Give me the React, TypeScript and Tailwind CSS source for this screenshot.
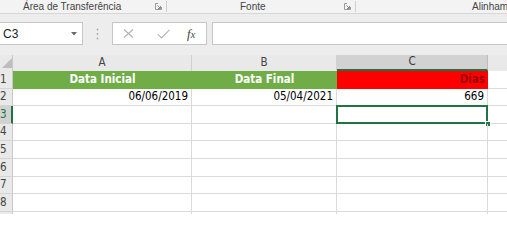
import React from "react";

const Launcher = () => (
  <svg width="7" height="7" viewBox="0 0 7 7" className="block">
    <path d="M0.5 0.5 H3 M0.5 0.5 V6.5 H6.5 V4" fill="none" stroke="#9a9a9a" strokeWidth="1" />
    <path d="M2.5 2.5 L5.5 5.5 M5.5 3 V5.5 H3" fill="none" stroke="#8a8a8a" strokeWidth="1" />
  </svg>
);

const rows = [1, 2, 3, 4, 5, 6, 7, 8, 9];
const cellFont = { fontFamily: '"DejaVu Sans Condensed", "Liberation Sans", Arial, sans-serif' };

export default function App() {
  return (
    <div
      className="w-[507px] h-[214px] overflow-hidden bg-[#ededed] flex flex-col"
      style={{ fontFamily: '"Liberation Sans", Arial, sans-serif' }}
    >
      {/* Ribbon group labels */}
      <div className="h-[14px] shrink-0 bg-[#f3f3f3] border-b border-[#d6d6d6] flex items-stretch text-[10px] leading-none text-[#444]">
        <div className="w-[167px] shrink-0 flex items-center border-r border-[#d0d0d0] my-[1px]">
          <span className="ml-[23px] whitespace-nowrap">Área de Transferência</span>
          <span className="ml-auto mr-[4px]"><Launcher /></span>
        </div>
        <div className="w-[189px] shrink-0 flex items-center border-r border-[#d0d0d0] my-[1px]">
          <span className="ml-[73px] whitespace-nowrap">Fonte</span>
          <span className="ml-auto mr-[4px]"><Launcher /></span>
        </div>
        <div className="flex-1 flex items-center overflow-hidden">
          <span className="ml-[116px] whitespace-nowrap">Alinham</span>
        </div>
      </div>

      {/* Formula bar */}
      <div className="h-[8px] shrink-0" />
      <div className="h-[23px] shrink-0 flex items-stretch">
        <div className="w-[83px] shrink-0 bg-white border-y border-r border-[#c6c6c6] flex items-center text-[12px] text-[#222]">
          <span className="ml-[3px]">C3</span>
          <svg width="6" height="4" viewBox="0 0 6 4" className="ml-auto mr-[5px]">
            <path d="M0 0 H6 L3 3.5 Z" fill="#6a6a6a" />
          </svg>
        </div>
        <div className="w-[29px] shrink-0 flex items-center justify-center">
          <svg width="3" height="12" viewBox="0 0 3 12" className="-ml-[1px]">
            <circle cx="1.5" cy="1.5" r="0.9" fill="#a8a8a8" />
            <circle cx="1.5" cy="6" r="0.9" fill="#a8a8a8" />
            <circle cx="1.5" cy="10.5" r="0.9" fill="#a8a8a8" />
          </svg>
        </div>
        <div className="w-[95px] shrink-0 bg-white border border-[#c6c6c6] flex items-center">
          <svg width="11" height="9" viewBox="0 0 11 9" className="ml-[10px]">
            <path d="M1 0.5 L10 8.5 M10 0.5 L1 8.5" stroke="#b3b3b3" strokeWidth="1.1" fill="none" />
          </svg>
          <svg width="13" height="10" viewBox="0 0 13 10" className="ml-[23px]">
            <path d="M0.8 5.2 L4.6 9 L12.4 0.8" stroke="#b3b3b3" strokeWidth="1.1" fill="none" />
          </svg>
          <span
            className="ml-[17px] text-[13px] italic text-[#444] leading-none"
            style={{ fontFamily: '"Liberation Serif", "Times New Roman", serif' }}
          >
            f<span className="text-[10px]">x</span>
          </span>
        </div>
        <div className="w-[5px] shrink-0" />
        <div className="flex-1 bg-white border-y border-l border-[#c6c6c6]" />
      </div>
      <div className="h-[10px] shrink-0" />

      {/* Grid */}
      <div className="flex-1 flex flex-col bg-white text-[11.5px] leading-none" style={cellFont}>
        {/* Column headers */}
        <div className="h-[16px] shrink-0 flex bg-[#e9e9e9] text-[#444] text-[11.5px]">
          <div className="w-[13px] shrink-0 border-r border-[#c9c9c9] relative">
            <svg width="10" height="10" viewBox="0 0 10 10" className="absolute left-[2px] top-[3px]">
              <path d="M10 0 V10 H0 Z" fill="#bdbdbd" />
            </svg>
          </div>
          <div className="w-[179px] shrink-0 border-r border-[#d0d0d0] flex items-center justify-center">A</div>
          <div className="w-[145px] shrink-0 border-r border-[#d0d0d0] flex items-center justify-center">B</div>
          <div className="w-[151px] shrink-0 bg-[#d2d2d2] border-r border-[#bdbdbd] border-b-2 border-b-[#217346] flex items-center justify-center text-[#3a3a3a]">C</div>
          <div className="flex-1" />
        </div>

        {rows.map((r) => {
          const sel = r === 3;
          return (
            <div key={r} className="h-[17.6px] shrink-0 flex">
              <div
                className={
                  sel
                    ? "w-[13px] shrink-0 bg-[#d2d2d2] border-r-2 border-r-[#217346] border-b border-b-[#d4d4d4] flex items-center text-[11.5px] text-[#217346]"
                    : "w-[13px] shrink-0 bg-[#e9e9e9] border-r border-r-[#c9c9c9] border-b border-b-[#d4d4d4] flex items-center text-[11.5px] text-[#444]"
                }
              >
                <span>{r}</span>
              </div>
              {r === 1 ? (
                <>
                  <div className="w-[179px] shrink-0 bg-[#70ad47] flex items-center justify-center font-bold text-white">
                    Data Inicial
                  </div>
                  <div className="w-[145px] shrink-0 bg-[#70ad47] flex items-center justify-center font-bold text-white">
                    Data Final
                  </div>
                  <div className="w-[151px] shrink-0 bg-[#ff0000] flex items-center justify-end pr-[3px] font-bold text-[#9c0006]">
                    Dias
                  </div>
                  <div className="flex-1 border-b border-[#dadada]" />
                </>
              ) : (
                <>
                  <div className="w-[179px] shrink-0 border-r border-b border-[#dadada] flex items-center justify-end pr-[3px] text-black">
                    {r === 2 ? "06/06/2019" : ""}
                  </div>
                  <div className="w-[145px] shrink-0 border-r border-b border-[#dadada] flex items-center justify-end pr-[3px] text-black">
                    {r === 2 ? "05/04/2021" : ""}
                  </div>
                  <div className="w-[151px] shrink-0 border-r border-b border-[#dadada] flex items-center justify-end pr-[3px] text-black relative">
                    {r === 2 ? "669" : ""}
                    {sel && (
                      <>
                        <div className="absolute -left-[1px] -top-[1px] right-[-1px] bottom-[-1px] border-2 border-[#217346]" />
                        <div className="absolute right-[-4px] bottom-[-4px] w-[6px] h-[6px] bg-[#217346] border border-white" />
                      </>
                    )}
                  </div>
                  <div className="flex-1 border-b border-[#dadada]" />
                </>
              )}
            </div>
          );
        })}
      </div>
    </div>
  );
}
